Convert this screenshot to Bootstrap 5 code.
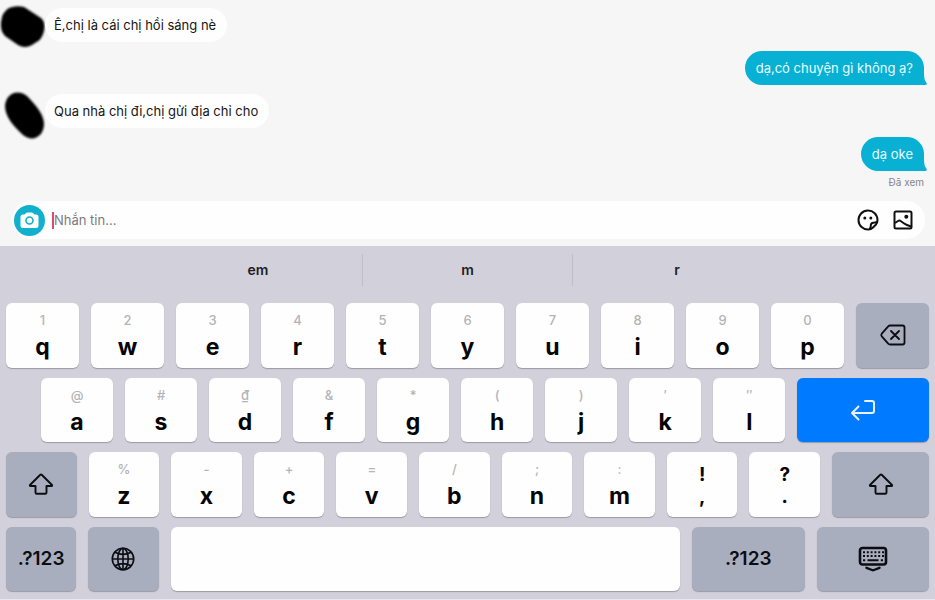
<!DOCTYPE html>
<html lang="vi">
<head>
<meta charset="utf-8">
<meta name="viewport" content="width=device-width, initial-scale=1">
<title>Tin nhắn</title>
<link href="https://cdn.jsdelivr.net/npm/bootstrap@5.3.0/dist/css/bootstrap.min.css" rel="stylesheet">
<style>
body{font-family:Inter,"Liberation Sans",sans-serif;background:#f6f6f7;color:#161616}
.msg-list{padding:8px 11px 0 0;gap:9px}
.avatar{width:45px;height:46px;margin:-4px 0 -8px;flex:none;overflow:visible}
.bubble{font-size:13px;line-height:20px;padding:7px 11px;border-radius:17px}
.bubble-in{background:#fefefe;padding-left:9px}
.bubble-out{background:#08b1d3;color:#e9fbff;border-bottom-right-radius:2px}
.bubble-tail{position:absolute;right:-3px;bottom:0;width:10px;height:12px}
.seen{font-size:10px;line-height:12px;color:#858588;margin-top:-4px;margin-bottom:0}
.composer{margin:13px 10px 7px 12px;padding:0 12px 0 2px;height:38px;border-radius:19px;background:#fefefe}
.icon-btn{border:0;background:none;padding:0;line-height:0}
.icon-btn svg{display:block}
.caret-bar{width:2px;height:17px;background:#dc4a70;margin-left:7px}
.composer-input{font-size:13px;line-height:20px;border:0;background:transparent;padding:0;outline:0;min-width:0;caret-color:transparent}
.composer-input::placeholder{color:#7b7b7d;opacity:1}
.tool-set{gap:14px}
.keyboard{background:#d2d0da;padding:8px 6px 8px;border-bottom:1px solid #e8e7ee}
.suggest{width:68%;margin-bottom:17px}
.suggest button{border:0;background:none;font-size:14px;line-height:32px;font-weight:600;color:#1d1c26;padding:0}
.suggest button+button{border-left:1px solid #bfbdc8}
.key-rows{gap:10px}
.key-row{gap:12px;flex:1 1 0}
.key-row-home{padding-left:35px}
.key{border:0;border-radius:6px;background:#fefefe;box-shadow:0 1px 1px #9a99a5;padding:0;color:#050505;flex:70 1 0;min-width:0;display:flex;flex-direction:column;align-items:center;justify-content:center}
.key b{font-size:23px;line-height:28px;font-weight:700}
.key i{font-style:normal;font-size:13px;font-weight:500;line-height:22px;color:#b4b4b7;margin-bottom:2px}
.key-fn{background:#a8aebe;font-size:19px;font-weight:600;color:#0c0d12}
.key-punct{font-size:19px;line-height:22px;font-weight:700;padding-top:3px}
.key-enter{background:#007aff;flex-grow:128}
.key-shift-r{flex-grow:96}
.key-space{flex-grow:507}
.key-wide{flex-grow:112}
</style>
<script src="https://cdn.jsdelivr.net/npm/bootstrap@5.3.0/dist/js/bootstrap.bundle.min.js"></script>
</head>
<body class="d-flex flex-column min-vh-100">
<main>
  <div class="msg-list d-flex flex-column">
    <div class="d-flex align-items-center">
      <svg class="avatar" viewBox="0 0 45 46" aria-hidden="true"><defs><filter id="soft" x="-20%" y="-20%" width="140%" height="140%"><feGaussianBlur stdDeviation="0.9"/></filter></defs><path filter="url(#soft)" d="M9 4Q16 1 24 3L41 14Q46 18 44 27Q42 36 35 39Q26 46 18 41L5 32Q0 27 1 18Q2 8 9 4Z"/></svg>
      <div class="bubble bubble-in">Ê,chị là cái chị hồi sáng nè</div>
    </div>
    <div class="d-flex justify-content-end">
      <div class="bubble bubble-out position-relative">dạ,có chuyện gì không ạ?<svg class="bubble-tail" viewBox="0 0 10 12" aria-hidden="true"><path fill="#08b1d3" d="M0 0H7Q7 7 9 9Q11 12 8 12H0Z"/></svg></div>
    </div>
    <div class="d-flex align-items-center">
      <svg class="avatar" viewBox="0 0 45 46" aria-hidden="true"><path filter="url(#soft)" d="M5 16C6 3 18 -1 27 6C36 15 44 25 44 34C44 46 33 53 23 45C13 36 5 26 5 16Z"/></svg>
      <div class="bubble bubble-in">Qua nhà chị đi,chị gửi địa chỉ cho</div>
    </div>
    <div class="d-flex justify-content-end">
      <div class="bubble bubble-out position-relative">dạ oke<svg class="bubble-tail" viewBox="0 0 10 12" aria-hidden="true"><path fill="#08b1d3" d="M0 0H7Q7 7 9 9Q11 12 8 12H0Z"/></svg></div>
    </div>
    <p class="seen text-end">Đã xem</p>
  </div>
  <form class="composer d-flex align-items-center">
    <button type="button" class="icon-btn" aria-label="Máy ảnh"><svg width="31" height="31" viewBox="0 0 31 31"><circle cx="15.500" cy="15.500" r="15.500" fill="#12b0cd"/><path fill="#fff" d="M9 9.500H10.500L12 8Q12.600 7.500 13.500 7.500H17.500Q18.400 7.500 19 8L20.500 9.500H22Q24.500 9.500 24.500 12V20.500Q24.500 23 22 23H9Q6.500 23 6.500 20.500V12Q6.500 9.500 9 9.500Z"/><circle cx="15.500" cy="15.500" r="3.500" fill="none" stroke="#12b0cd" stroke-width="1.600"/></svg></button>
    <span class="caret-bar" aria-hidden="true"></span>
    <input class="composer-input flex-grow-1" type="text" placeholder="Nhắn tin..." aria-label="Nhắn tin">
    <div class="tool-set d-flex align-items-center">
      <button type="button" class="icon-btn" aria-label="Nhãn dán"><svg width="22" height="22" viewBox="0 0 22 22" fill="none" stroke="#101010" stroke-width="2" stroke-linejoin="round"><path d="M20.500 11A9.500 9.500 0 1 0 11.500 20.500Q14 20.500 16 18.500L19 15.500Q20.500 13.500 20.500 11Z"/><path d="M12.500 20.200Q14 18.500 13.800 16.500Q13.800 13.800 16.500 13.700Q19 13.700 20.300 12.500"/><g fill="#101010" stroke="none"><circle cx="7.800" cy="9" r="1.500"/><circle cx="13.800" cy="9" r="1.500"/></g></svg></button>
      <button type="button" class="icon-btn" aria-label="Ảnh"><svg width="20" height="20" viewBox="0 0 20 20" fill="none" stroke="#101010" stroke-width="2" stroke-linejoin="round"><rect x="1.500" y="1.500" width="17" height="17" rx="1.500"/><path d="M2 13L5 11Q6.500 10 8 11.200L11.500 13.700Q12.700 14.500 14 15L18 16.500"/><circle cx="13.300" cy="6.800" r="2" fill="#101010" stroke="none"/></svg></button>
    </div>
  </form>
</main>
<section class="keyboard flex-grow-1 d-flex flex-column" aria-label="Bàn phím">
  <div class="suggest d-flex mx-auto"><button type="button" class="col">em</button><button type="button" class="col">m</button><button type="button" class="col">r</button></div>
  <div class="key-rows d-flex flex-column flex-grow-1">
    <div class="key-row d-flex">
      <button type="button" class="key"><i>1</i><b>q</b></button><button type="button" class="key"><i>2</i><b>w</b></button><button type="button" class="key"><i>3</i><b>e</b></button><button type="button" class="key"><i>4</i><b>r</b></button><button type="button" class="key"><i>5</i><b>t</b></button><button type="button" class="key"><i>6</i><b>y</b></button><button type="button" class="key"><i>7</i><b>u</b></button><button type="button" class="key"><i>8</i><b>i</b></button><button type="button" class="key"><i>9</i><b>o</b></button><button type="button" class="key"><i>0</i><b>p</b></button>
      <button type="button" class="key key-fn" aria-label="Xóa"><svg width="26" height="22" viewBox="0 0 26 22" fill="none" stroke="#0c0d12" stroke-width="1.800" stroke-linejoin="round" stroke-linecap="round"><path d="M10 1.500H22.500Q24.500 1.500 24.500 3.500V18.500Q24.500 20.500 22.500 20.500H10Q9 20.500 8.200 19.700L1.800 12.300Q.8 11 1.800 9.700L8.200 2.300Q9 1.500 10 1.500ZM11 7L19 15M19 7L11 15"/></svg></button>
    </div>
    <div class="key-row key-row-home d-flex">
      <button type="button" class="key"><i>@</i><b>a</b></button><button type="button" class="key"><i>#</i><b>s</b></button><button type="button" class="key"><i>₫</i><b>d</b></button><button type="button" class="key"><i>&amp;</i><b>f</b></button><button type="button" class="key"><i>*</i><b>g</b></button><button type="button" class="key"><i>(</i><b>h</b></button><button type="button" class="key"><i>)</i><b>j</b></button><button type="button" class="key"><i>′</i><b>k</b></button><button type="button" class="key"><i>″</i><b>l</b></button>
      <button type="button" class="key key-enter" aria-label="Nhập"><svg width="26" height="22" viewBox="0 0 26 22" fill="none" stroke="#e8f3ff" stroke-width="2" stroke-linejoin="round" stroke-linecap="round"><path d="M15 2H22Q24 2 24 4V12Q24 14 22 14H2M8.500 7.500L2 14L8.500 20.500"/></svg></button>
    </div>
    <div class="key-row d-flex">
      <button type="button" class="key key-fn" aria-label="Shift"><svg width="26" height="22" viewBox="0 0 26 22" fill="none" stroke="#0c0d12" stroke-width="1.900" stroke-linejoin="round"><path d="M12.300 1.800Q13 1.200 13.700 1.800L24 12Q24.500 13 23.500 13H18.500V19.500Q18.500 20.800 17.200 20.800H8.800Q7.500 20.800 7.500 19.500V13H2.500Q1.500 13 2 12Z"/></svg></button>
      <button type="button" class="key"><i>%</i><b>z</b></button><button type="button" class="key"><i>-</i><b>x</b></button><button type="button" class="key"><i>+</i><b>c</b></button><button type="button" class="key"><i>=</i><b>v</b></button><button type="button" class="key"><i>/</i><b>b</b></button><button type="button" class="key"><i>;</i><b>n</b></button><button type="button" class="key"><i>:</i><b>m</b></button><button type="button" class="key key-punct"><span>!</span><span>,</span></button><button type="button" class="key key-punct"><span>?</span><span>.</span></button>
      <button type="button" class="key key-fn key-shift-r" aria-label="Shift"><svg width="26" height="22" viewBox="0 0 26 22" fill="none" stroke="#0c0d12" stroke-width="1.900" stroke-linejoin="round"><path d="M12.300 1.800Q13 1.200 13.700 1.800L24 12Q24.500 13 23.500 13H18.500V19.500Q18.500 20.800 17.200 20.800H8.800Q7.500 20.800 7.500 19.500V13H2.500Q1.500 13 2 12Z"/></svg></button>
    </div>
    <div class="key-row d-flex">
      <button type="button" class="key key-fn">.?123</button>
      <button type="button" class="key key-fn" aria-label="Đổi ngôn ngữ"><svg width="24" height="24" viewBox="0 0 24 24" fill="none" stroke="#0c0d12" stroke-width="1.600"><circle cx="12" cy="12" r="10.700"/><ellipse cx="12" cy="12" rx="5.200" ry="10.700"/><path d="M12 1.300V22.700M1.300 12H22.700M4 5.200Q12 9.500 20 5.200M4 18.800Q12 14.500 20 18.800"/></svg></button>
      <button type="button" class="key key-space" aria-label="Dấu cách"></button>
      <button type="button" class="key key-fn key-wide">.?123</button>
      <button type="button" class="key key-fn key-wide" aria-label="Ẩn bàn phím"><svg width="30" height="26" viewBox="0 0 30 26" fill="none" stroke="#0c0d12" stroke-width="2"><rect x="2" y="2" width="26" height="16.500" rx="2.500" stroke-width="2.600"/><g stroke-dasharray="2 1.800"><path d="M5 6.200H26M5 10H26"/></g><path d="M5 14.200H7.200M9.500 14.200H20.500M22.800 14.200H25"/><path stroke-width="2.400" stroke-linecap="round" stroke-linejoin="round" d="M8.500 21.800L14 24Q15 24.400 16 24L21.500 21.800"/></svg></button>
    </div>
  </div>
</section>
</body>
</html>
